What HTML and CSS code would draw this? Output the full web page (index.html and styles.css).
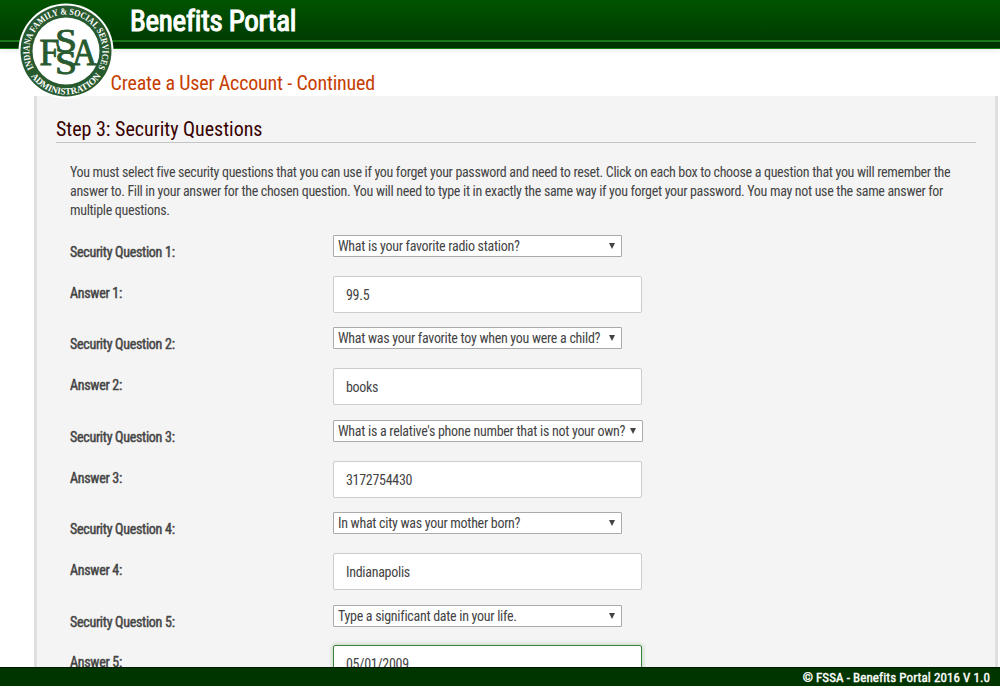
FILE: index.html
```html
<!DOCTYPE html>
<html lang="en">
<head>
<meta charset="utf-8">
<title>Benefits Portal</title>
<link rel="stylesheet" href="styles.css">
</head>
<body>
<div class="page">
  <header class="header">
    <h1 class="brand">Benefits Portal</h1>
    <div class="header-strip"></div>
    <svg class="logo" viewBox="0 0 96 96">
      <defs>
        <path id="arc-top" d="M16.390 66.250A36.500 36.500 0 1 1 79.610 66.250"/>
        <path id="arc-bottom" d="M8.500 65A42.700 42.700 0 0 0 87.500 65"/>
      </defs>
      <circle cx="48" cy="48" r="47.5" fill="#fff"/>
      <circle cx="48" cy="48" r="45.5" fill="#285a30"/>
      <circle cx="48" cy="48" r="33.5" fill="#fff"/>
      <g class="seal-text">
        <text><textPath href="#arc-top" startOffset="50%" text-anchor="middle" textLength="150" lengthAdjust="spacingAndGlyphs">INDIANA FAMILY &amp; SOCIAL SERVICES</textPath></text>
        <text><textPath href="#arc-bottom" startOffset="50%" text-anchor="middle" textLength="82" lengthAdjust="spacingAndGlyphs">ADMINISTRATION</textPath></text>
      </g>
      <g class="seal-mono">
        <text x="21.500" y="61.500" font-size="37" textLength="20" lengthAdjust="spacingAndGlyphs">F</text>
        <text x="54" y="61.500" font-size="37" textLength="25" lengthAdjust="spacingAndGlyphs">A</text>
        <text x="37" y="48.500" font-size="34" textLength="22" lengthAdjust="spacingAndGlyphs">S</text>
        <text x="37" y="71" font-size="34" textLength="22" lengthAdjust="spacingAndGlyphs">S</text>
      </g>
    </svg>
  </header>
  <h2 class="title">Create a User Account - Continued</h2>
  <main class="panel">
    <h3 class="step">Step 3: Security Questions</h3>
    <p class="intro">You must select five security questions that you can use if you forget your password and need to reset. Click on each box to choose a question that you will remember the<br>answer to. Fill in your answer for the chosen question. You will need to type it in exactly the same way if you forget your password. You may not use the same answer for<br>multiple questions.</p>
    <div class="group"><span class="label">Security Question 1:</span><div class="select"><span>What is your favorite radio station?</span><i class="arrow"></i></div><span class="label">Answer 1:</span><div class="input">99.5</div></div>
    <div class="group"><span class="label">Security Question 2:</span><div class="select"><span>What was your favorite toy when you were a child?</span><i class="arrow"></i></div><span class="label">Answer 2:</span><div class="input">books</div></div>
    <div class="group"><span class="label">Security Question 3:</span><div class="select wide"><span>What is a relative's phone number that is not your own?</span><i class="arrow"></i></div><span class="label">Answer 3:</span><div class="input">3172754430</div></div>
    <div class="group"><span class="label">Security Question 4:</span><div class="select"><span>In what city was your mother born?</span><i class="arrow"></i></div><span class="label">Answer 4:</span><div class="input">Indianapolis</div></div>
    <div class="group"><span class="label">Security Question 5:</span><div class="select"><span>Type a significant date in your life.</span><i class="arrow"></i></div><span class="label">Answer 5:</span><div class="input focus">05/01/2009</div></div>
  </main>
  <footer class="footer">© FSSA - Benefits Portal 2016 V 1.0</footer>
</div>
</body>
</html>
```
FILE: styles.css
```css
* { box-sizing: border-box; }
body { margin: 0; background: #fff; color: #444; font-family: "Roboto Condensed", Roboto, sans-serif; font-stretch: condensed; font-size: 14px; letter-spacing: -.29px; }
h1, h2, h3, p { margin: 0; }
.page { height: 686px; display: flex; flex-direction: column; overflow: hidden; }
.header { position: relative; flex: none; height: 49px; background: linear-gradient(#005400, #003c00 40px); border-bottom: 1px solid #108010; box-shadow: 0 1px 6px rgba(0,0,0,.1); }
.brand { height: 40px; padding-left: 130px; line-height: 42px; font-size: 29px; font-weight: 400; -webkit-text-stroke: 1.1px #fff; color: #fff; white-space: nowrap; }
.header-strip { height: 8px; background: #003200; border-top: 2px solid #187818; }
.logo { position: absolute; left: 18px; top: 3px; width: 96px; height: 96px; z-index: 2; letter-spacing: 0; }
.seal-text { font-family: "Liberation Serif", serif; font-weight: 700; font-size: 9.4px; fill: #fff; }
.seal-mono { font-family: "Liberation Serif", serif; fill: #285a30; stroke: #285a30; stroke-width: .9px; }
.title { flex: none; height: 47px; padding: 20px 0 0 110.6px; line-height: 29px; font-size: 20px; font-weight: 400; letter-spacing: -.18px; color: #c63e00; white-space: nowrap; }
.panel { flex: 1; min-height: 0; overflow: hidden; margin: 0 2px 0 34px; background: #f4f4f4; border: solid #e0e0e0; border-width: 0 3px; padding: 20px 19px 0; }
.step { height: 27px; border-bottom: 1px solid #c4c4c4; line-height: 27px; font-size: 20px; font-weight: 400; letter-spacing: -.02px; color: #380000; white-space: nowrap; }
.intro { padding: 20px 0 0 14px; height: 92px; line-height: 19.2px; letter-spacing: -.323px; white-space: nowrap; }
.group { display: grid; grid-template-columns: 263px 310px; grid-template-rows: 40.8px 51.6px; padding-left: 14px; }
.label { font-weight: 400; -webkit-text-stroke: .45px #444; line-height: 34px; white-space: nowrap; }
.select { display: flex; align-items: center; justify-content: space-between; width: 289px; height: 22px; padding: 0 6px 0 4px; background: #fff; border: 1px solid #aaa; border-radius: 1px; white-space: nowrap; }
.select.wide { width: 310px; }
.arrow { border: solid transparent; border-width: 6px 3px 0; border-top-color: #444; }
.input { width: 309px; height: 37px; padding-left: 12px; line-height: 36px; background: #fff; border: 1px solid #ccc; border-radius: 2px; white-space: nowrap; }
.input.focus { border-color: #3c803c; box-shadow: 0 0 5px rgba(0,110,0,.3); }
.footer { flex: none; height: 19px; padding-right: 10px; background: #003500; border-top: 1px solid #001c00; color: #fff; line-height: 19px; font-size: 13px; font-weight: 400; letter-spacing: .09px; -webkit-text-stroke: .4px #fff; text-align: right; }
```
